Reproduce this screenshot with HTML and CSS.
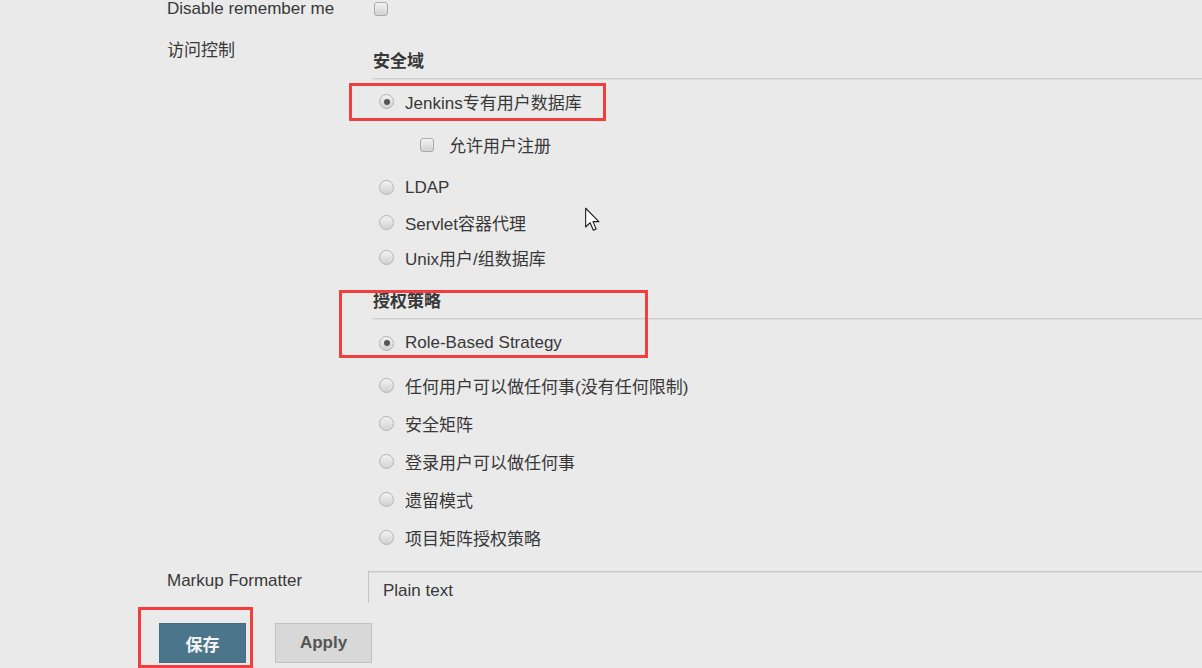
FILE: index.html
```html
<!DOCTYPE html>
<html>
<head>
  <title>Configure Global Security</title>
  <link rel="stylesheet" href="styles.css">
</head>
<body>

  <div class="page">
    <div class="row first">
      <div class="label">Disable remember me</div>
      <div class="field"><input type="checkbox" class="lone"></div>
    </div>

    <div class="row access">
      <div class="label">访问控制</div>
      <div class="field">
        <div class="section-head">安全域</div>
        <div class="opts realm">
          <label class="opt"><input type="radio" name="realm" checked>Jenkins专有用户数据库</label>
          <div class="sub">
            <label class="opt"><input type="checkbox">允许用户注册</label>
          </div>
          <label class="opt"><input type="radio" name="realm">LDAP</label>
          <label class="opt"><input type="radio" name="realm">Servlet容器代理</label>
          <label class="opt"><input type="radio" name="realm">Unix用户/组数据库</label>
        </div>

        <div class="section-head">授权策略</div>
        <div class="opts auth">
          <label class="opt"><input type="radio" name="auth" checked>Role-Based Strategy</label>
          <div class="nested"></div>
          <label class="opt"><input type="radio" name="auth">任何用户可以做任何事(没有任何限制)</label>
          <label class="opt"><input type="radio" name="auth">安全矩阵</label>
          <label class="opt"><input type="radio" name="auth">登录用户可以做任何事</label>
          <label class="opt"><input type="radio" name="auth">遗留模式</label>
          <label class="opt"><input type="radio" name="auth">项目矩阵授权策略</label>
        </div>
      </div>
    </div>

    <div class="row markup">
      <div class="label">Markup Formatter</div>
      <div class="field"><div class="select">Plain text</div></div>
    </div>
  </div>

  <div class="bottom-bar">
    <button class="btn save">保存</button>
    <button class="btn apply">Apply</button>
  </div>

  <!-- annotation boxes + mouse pointer from the screen recording -->
  <div class="mark mark-realm"></div>
  <div class="mark mark-auth"></div>
  <div class="mark mark-save"></div>

  <svg class="pointer" width="17" height="25" viewBox="0 0 13 20">
    <path d="M1 1 L1 16 L4.6 12.6 L7.2 18.6 L9.4 17.6 L6.9 11.7 L11.6 11.7 Z" fill="#fff" stroke="#222" stroke-width="0.9" stroke-linejoin="round"/>
  </svg>

</body>
</html>
```

FILE: styles.css
```css
html, body {
  height: 100%;
}

body {
  margin: 0;
  position: relative;
  overflow: hidden;
  background-color: #eaeaea;
  color: #383838;
  font-family: "Liberation Sans", "Noto Sans CJK SC", sans-serif;
  font-size: 17px;
}

.page {
  padding-left: 167px;
}

.row {
  display: grid;
  grid-template-columns: 205px 1fr;
}

.label {
  line-height: 20px;
}

.row.first .label {
  line-height: 18px;
}

.row.first .field {
  display: flex;
  align-items: center;
  height: 18px;
}

.row.access {
  margin-top: 23px;
}

.row.access .field {
  padding-top: 11px;
}

.section-head {
  font-weight: bold;
  line-height: 20px;
  padding-left: 1px;
  padding-bottom: 6px;
  border-bottom: 1px solid #cfcfcf;
  box-shadow: 0 1px 0 #dedede;
}

.opts {
  margin-top: 5px;
  padding-left: 7px;
}

.opts.realm {
  margin-bottom: 17px;
}

.opt {
  display: flex;
  align-items: center;
  height: 35px;
  white-space: nowrap;
}

.opts.auth .opt {
  height: 38px;
}

.nested {
  height: 4px;
}

.sub {
  margin: 8px 0 8px 41px;
}

input[type="radio"],
input[type="checkbox"] {
  -webkit-appearance: none;
  appearance: none;
  margin: 0 11px 0 0;
  width: 15px;
  height: 15px;
  box-sizing: border-box;
  border: 1px solid #b4b4b4;
  background: linear-gradient(#f2f2f2, #d2d2d2);
  position: relative;
  flex: none;
}

input[type="radio"] {
  border-radius: 50%;
}

input[type="radio"]:checked::after {
  content: "";
  position: absolute;
  left: 3.5px;
  top: 3.5px;
  width: 6px;
  height: 6px;
  border-radius: 50%;
  background: #555;
}

input[type="checkbox"] {
  width: 14px;
  height: 14px;
  border-radius: 3px;
  border-color: #a9a9a9;
  margin-right: 15px;
}

input.lone {
  margin-left: 2px;
}

.row.markup {
  margin-top: 15px;
}

.row.markup .field {
  margin-left: -4px;
  overflow: hidden;
}

.select {
  width: calc(100% + 20px);
  height: 32px;
  box-sizing: border-box;
  padding: 9px 14px 0;
  line-height: 20px;
  border: 1px solid #c6c6c6;
  border-bottom: none;
  box-shadow: inset 0 1px 1px #dcdcdc;
}

.bottom-bar {
  padding: 20px 0 0 159px;
  display: flex;
  gap: 29px;
}

.btn {
  height: 40px;
  font-family: "Liberation Sans", "Noto Sans CJK SC", sans-serif;
  font-size: 17px;
  font-weight: bold;
  cursor: pointer;
}

.btn.save {
  width: 87px;
  background-color: #4b758b;
  color: #f4f4f4;
  border: 1px solid #456c80;
}

.btn.apply {
  width: 97px;
  background-color: #d8d8d8;
  color: #555;
  border: 1px solid #c2c2c2;
}

.mark {
  position: absolute;
  border: 3px solid #f43d3d;
  box-sizing: border-box;
}

.mark-realm {
  left: 349px;
  top: 83px;
  width: 257px;
  height: 38px;
}

.mark-auth {
  left: 339px;
  top: 290px;
  width: 309px;
  height: 68px;
}

.mark-save {
  left: 138px;
  top: 607px;
  width: 115px;
  height: 61px;
}

.pointer {
  position: absolute;
  left: 584px;
  top: 207px;
}
```
